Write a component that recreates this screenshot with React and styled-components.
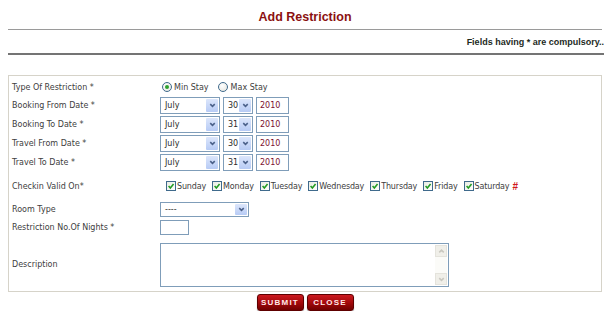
import React from 'react'
import styled, { createGlobalStyle } from 'styled-components'

const GlobalStyle = createGlobalStyle`
  body {
    margin: 0;
    background: #ffffff;
    font-family: "DejaVu Sans", Verdana, sans-serif;
  }
`

const Page = styled.div`
  width: 594px;
  margin-left: 8px;
`

const Title = styled.h1`
  margin: 0;
  height: 30px;
  padding-top: 5px;
  box-sizing: border-box;
  display: flex;
  align-items: center;
  justify-content: center;
  font-family: "Liberation Sans", Arial, sans-serif;
  font-size: 12.5px;
  font-weight: bold;
  color: #8b1111;
  border-bottom: 1px solid #9a9a9a;
`

const Notice = styled.div`
  height: 23px;
  display: flex;
  align-items: center;
  justify-content: flex-end;
  margin-right: -2px;
  font-family: "Liberation Sans", Arial, sans-serif;
  font-size: 9px;
  font-weight: bold;
  color: #1d2a1d;
  border-bottom: 2px solid #747474;
`

const FormBox = styled.div`
  margin-top: 20px;
  border: 1px solid #d6d3c9;
  padding-top: 2px;
  display: grid;
  grid-template-columns: 151px 1fr;
  grid-template-rows: 18px repeat(4, 19px) 28px 18px 19px 54px;
`

const Label = styled.div`
  display: flex;
  align-items: center;
  padding-left: 3px;
  font-size: 8px;
  color: #404040;
`

const Field = styled.div`
  display: flex;
  align-items: center;
  gap: ${p => p.gap || 0}px;
  font-size: 8px;
  color: #404040;
  letter-spacing: ${p => p.tight ? '-0.15px' : 'normal'};
`

const Choice = styled.label`
  display: flex;
  align-items: center;
  gap: ${p => p.gap || 2}px;
  margin-left: ${p => p.offset || 0}px;
`

const Radio = styled.span`
  width: 10px;
  height: 10px;
  box-sizing: border-box;
  border-radius: 50%;
  border: 1px solid #3f6a8c;
  background: radial-gradient(circle at 40% 35%, #ffffff, #e3e3dc);
  display: flex;
  align-items: center;
  justify-content: center;
  &::after {
    content: '';
    width: 4px;
    height: 4px;
    border-radius: 50%;
    background: ${p => (p.checked ? '#2ea12e' : 'transparent')};
  }
`

const Check = styled.span`
  width: 10px;
  height: 10px;
  box-sizing: border-box;
  border: 1px solid #3f6a8c;
  background: linear-gradient(135deg, #e9ede3, #ffffff);
  display: flex;
  align-items: center;
  justify-content: center;
`

const SelectBox = styled.div`
  width: ${p => p.w}px;
  height: ${p => p.h || 17}px;
  box-sizing: border-box;
  border: 1px solid #7f9db9;
  background: #fff;
  display: flex;
  align-items: stretch;
  justify-content: space-between;
  padding: 1px;
`

const SelectText = styled.span`
  display: flex;
  align-items: center;
  padding-left: 3px;
  color: #2b2b2b;
`

const ArrowBtn = styled.span`
  width: 12px;
  background: linear-gradient(#dce6fb, #b7cbf5);
  border-radius: 1px;
  display: flex;
  align-items: center;
  justify-content: center;
`

const TextBox = styled.div`
  width: ${p => p.w}px;
  height: ${p => p.h || 17}px;
  box-sizing: border-box;
  border: 1px solid #7f9db9;
  background: #fff;
  display: flex;
  align-items: center;
  padding-left: 3px;
  color: #7b1030;
`

const TextArea = styled.div`
  width: 289px;
  height: 44px;
  margin-top: 2px;
  box-sizing: border-box;
  border: 1px solid #7f9db9;
  background: #fff;
  display: flex;
  justify-content: flex-end;
  padding: 1px;
`

const Scrollbar = styled.div`
  width: 12px;
  background: #fbfbf8;
  display: flex;
  flex-direction: column;
  justify-content: space-between;
`

const ScrollBtn = styled.span`
  height: 12px;
  background: #f0efe9;
  border: 1px solid #e4e3dc;
  box-sizing: border-box;
  display: flex;
  align-items: center;
  justify-content: center;
`

const Hash = styled.span`
  margin-left: 2px;
  color: #d11a1a;
  font-weight: bold;
  font-family: "Liberation Sans", Arial, sans-serif;
  font-size: 10px;
`

const Actions = styled.div`
  display: flex;
  justify-content: center;
  gap: 3px;
  padding-top: 2px;
`

const Button = styled.button`
  width: 47px;
  height: 17px;
  border: 1px solid #5e0000;
  border-radius: 3px;
  background: linear-gradient(#cc1a20, #a0080a 55%, #700000);
  box-shadow: 0 1px 1px rgba(0, 0, 0, 0.35);
  color: #ffe9e9;
  font-family: "Liberation Sans", Arial, sans-serif;
  font-size: 8px;
  font-weight: bold;
  letter-spacing: 1.2px;
  padding: 0;
`

function Chevron({ up, color = '#4a6089' }) {
  const d = up ? 'M2.5 6 L5 3.5 L7.5 6' : 'M2.5 3.5 L5 6 L7.5 3.5'
  return (
    <svg width="9" height="9" viewBox="0 0 10 10">
      <path d={d} fill="none" stroke={color} strokeWidth="1.7" />
    </svg>
  )
}

function Select({ w, h, value }) {
  return (
    <SelectBox w={w} h={h}>
      <SelectText>{value}</SelectText>
      <ArrowBtn>
        <Chevron />
      </ArrowBtn>
    </SelectBox>
  )
}

function DateField({ day }) {
  return (
    <Field gap={3}>
      <Select w={60} value="July" />
      <Select w={30} value={day} />
      <TextBox w={33}>2010</TextBox>
    </Field>
  )
}

const days = ['Sunday', 'Monday', 'Tuesday', 'Wednesday', 'Thursday', 'Friday', 'Saturday']

export default function App() {
  return (
    <Page>
      <GlobalStyle />
      <Title>Add Restriction</Title>
      <Notice>Fields having * are compulsory..</Notice>

      <FormBox>
        <Label>Type Of Restriction *</Label>
        <Field>
          <Choice offset={2}>
            <Radio checked />Min Stay
          </Choice>
          <Choice offset={9} gap={3}>
            <Radio />Max Stay
          </Choice>
        </Field>

        <Label>Booking From Date *</Label>
        <DateField day="30" />
        <Label>Booking To Date *</Label>
        <DateField day="31" />
        <Label>Travel From Date *</Label>
        <DateField day="30" />
        <Label>Travel To Date *</Label>
        <DateField day="31" />

        <Label>Checkin Valid On*</Label>
        <Field gap={6} tight>
          {days.map((d, i) => (
            <Choice key={d} offset={i === 0 ? 6 : 0} gap={1}>
              <Check>
                <svg width="8" height="8" viewBox="0 0 10 10">
                  <path d="M2 5 L4.2 7.4 L8.2 2.6" fill="none" stroke="#239b23" strokeWidth="2" />
                </svg>
              </Check>
              {d}
              {i === days.length - 1 && <Hash>#</Hash>}
            </Choice>
          ))}
        </Field>

        <Label>Room Type</Label>
        <Field>
          <Select w={89} h={15} value="----" />
        </Field>

        <Label>Restriction No.Of Nights *</Label>
        <Field>
          <TextBox w={29} h={15} />
        </Field>

        <Label>Description</Label>
        <Field>
          <TextArea>
            <Scrollbar>
              <ScrollBtn>
                <Chevron up color="#c9c8c0" />
              </ScrollBtn>
              <ScrollBtn>
                <Chevron color="#c9c8c0" />
              </ScrollBtn>
            </Scrollbar>
          </TextArea>
        </Field>
      </FormBox>

      <Actions>
        <Button>SUBMIT</Button>
        <Button>CLOSE</Button>
      </Actions>
    </Page>
  )
}
